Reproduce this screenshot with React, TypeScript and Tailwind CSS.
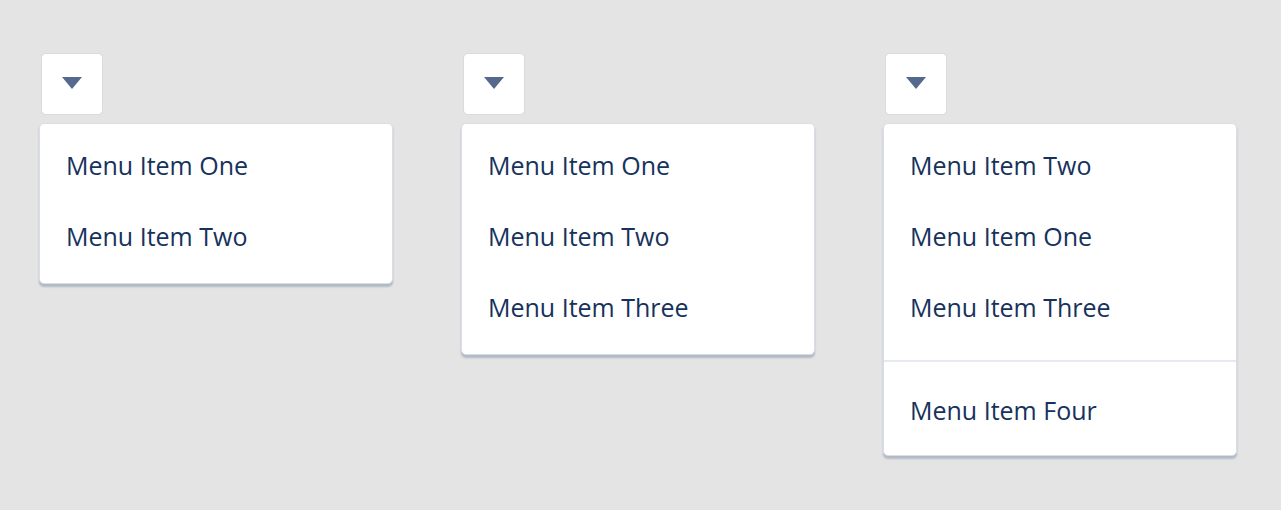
import React from "react";

const Trigger = () => (
  <button className="ml-[2px] flex h-[62px] w-[62px] items-center justify-center rounded-[5px] border border-[#dcdbdb] bg-white">
    <svg width="20" height="12" viewBox="0 0 20 12" className="mt-[-2px]">
      <path d="M0 0 H20 L10 12 Z" fill="#54698d" />
    </svg>
  </button>
);

const Item = ({ label }: { label: string }) => (
  <div className="flex h-[71px] items-center px-[26px] text-[25px] text-[#16325c]">{label}</div>
);

const Menu = ({ children, pb = "pb-[11px]" }: { children: React.ReactNode; pb?: string }) => (
  <div
    className={`mt-[8px] w-[354px] rounded-[5px] border border-[#d8dde6] bg-white pt-[6px] ${pb} shadow-[0_3px_2px_0_rgba(84,105,141,0.35)]`}
  >
    {children}
  </div>
);

export default function App() {
  return (
    <div
      className="flex h-[510px] w-[1281px] items-start gap-[68px] bg-[#e4e4e4] pl-[39px] pt-[53px]"
      style={{ fontFamily: '"Open Sans", "Noto Sans", sans-serif' }}
    >
      <div className="flex flex-col">
        <Trigger />
        <Menu>
          <Item label="Menu Item One" />
          <Item label="Menu Item Two" />
        </Menu>
      </div>
      <div className="flex flex-col">
        <Trigger />
        <Menu>
          <Item label="Menu Item One" />
          <Item label="Menu Item Two" />
          <Item label="Menu Item Three" />
        </Menu>
      </div>
      <div className="flex flex-col">
        <Trigger />
        <Menu pb="pb-[9px]">
          <Item label="Menu Item Two" />
          <Item label="Menu Item One" />
          <Item label="Menu Item Three" />
          <div className="mt-[17px] mb-[13px] h-[2px] bg-[#e6e9ef]" />
          <Item label="Menu Item Four" />
        </Menu>
      </div>
    </div>
  );
}
